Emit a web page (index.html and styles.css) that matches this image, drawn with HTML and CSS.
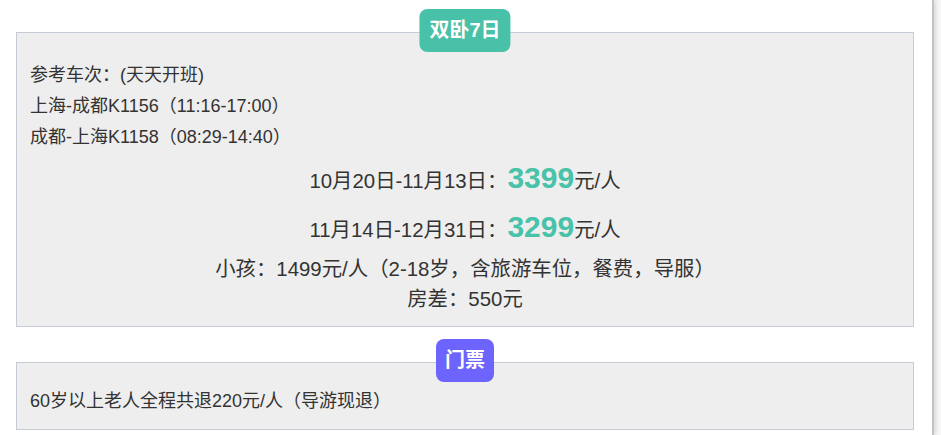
FILE: index.html
```html
<!DOCTYPE html>
<html lang="zh-CN">
<head>
<meta charset="utf-8">
<title>线路价格</title>
<link rel="stylesheet" href="styles.css">
</head>
<body>
<div class="page">
  <section class="box box-main">
    <span class="badge badge-green">双卧7日</span>
    <p class="line">参考车次：(天天开班)</p>
    <p class="line">上海-成都K1156（11:16-17:00）</p>
    <p class="line">成都-上海K1158（08:29-14:40）</p>
    <div class="prices">
      <p class="price-row">10月20日-11月13日：<span class="price">3399</span>元/人</p>
      <p class="price-row">11月14日-12月31日：<span class="price">3299</span>元/人</p>
      <p class="note">小孩：1499元/人（2-18岁，含旅游车位，餐费，导服）</p>
      <p class="note">房差：550元</p>
    </div>
  </section>
  <section class="box box-ticket">
    <span class="badge badge-purple">门票</span>
    <p class="line">60岁以上老人全程共退220元/人（导游现退）</p>
  </section>
</div>
</body>
</html>
```
FILE: styles.css
```css
html {
  background: #f7f7f7;
}
body {
  margin: 0;
  font-family: "Liberation Sans", "Noto Sans CJK SC", sans-serif;
  color: #333;
}
.page {
  width: 934px;
  min-height: 100vh;
  background: #fff;
  border-right: 2px solid #c4c4c4;
  box-shadow: 2px 0 4px rgba(0, 0, 0, 0.12);
  padding: 32px 0 1px 16px;
  box-sizing: border-box;
  display: flex;
  flex-direction: column;
  gap: 35px;
}
.box {
  position: relative;
  width: 898px;
  box-sizing: border-box;
  background: #eeeeee;
  border: 1px solid #c6ccd6;
  padding-left: 13px;
  padding-right: 13px;
}
.box-main {
  padding-top: 27px;
  padding-bottom: 12px;
}
.box-ticket {
  padding-top: 23px;
  padding-bottom: 12px;
}
.badge {
  position: absolute;
  top: -24px;
  left: 50%;
  transform: translateX(-50%);
  height: 43px;
  line-height: 43px;
  padding: 0 10px;
  border-radius: 8px;
  color: #fff;
  font-weight: bold;
  font-size: 20px;
  white-space: nowrap;
}
.badge-green {
  background: #49c1a8;
}
.badge-purple {
  background: #6d63fd;
  padding: 0 9px;
}
.line {
  margin: 0;
  font-size: 18px;
  line-height: 31px;
}
.prices {
  margin-top: 4px;
  text-align: center;
  font-size: 20.4px;
}
.price-row {
  margin: 0;
  line-height: 48px;
}
.price-row + .price-row {
  margin-top: 1px;
}
.price {
  color: #48c2a8;
  font-weight: bold;
  font-size: 30px;
  line-height: 20px;
}
.note {
  margin: 0;
  line-height: 30px;
}
```
